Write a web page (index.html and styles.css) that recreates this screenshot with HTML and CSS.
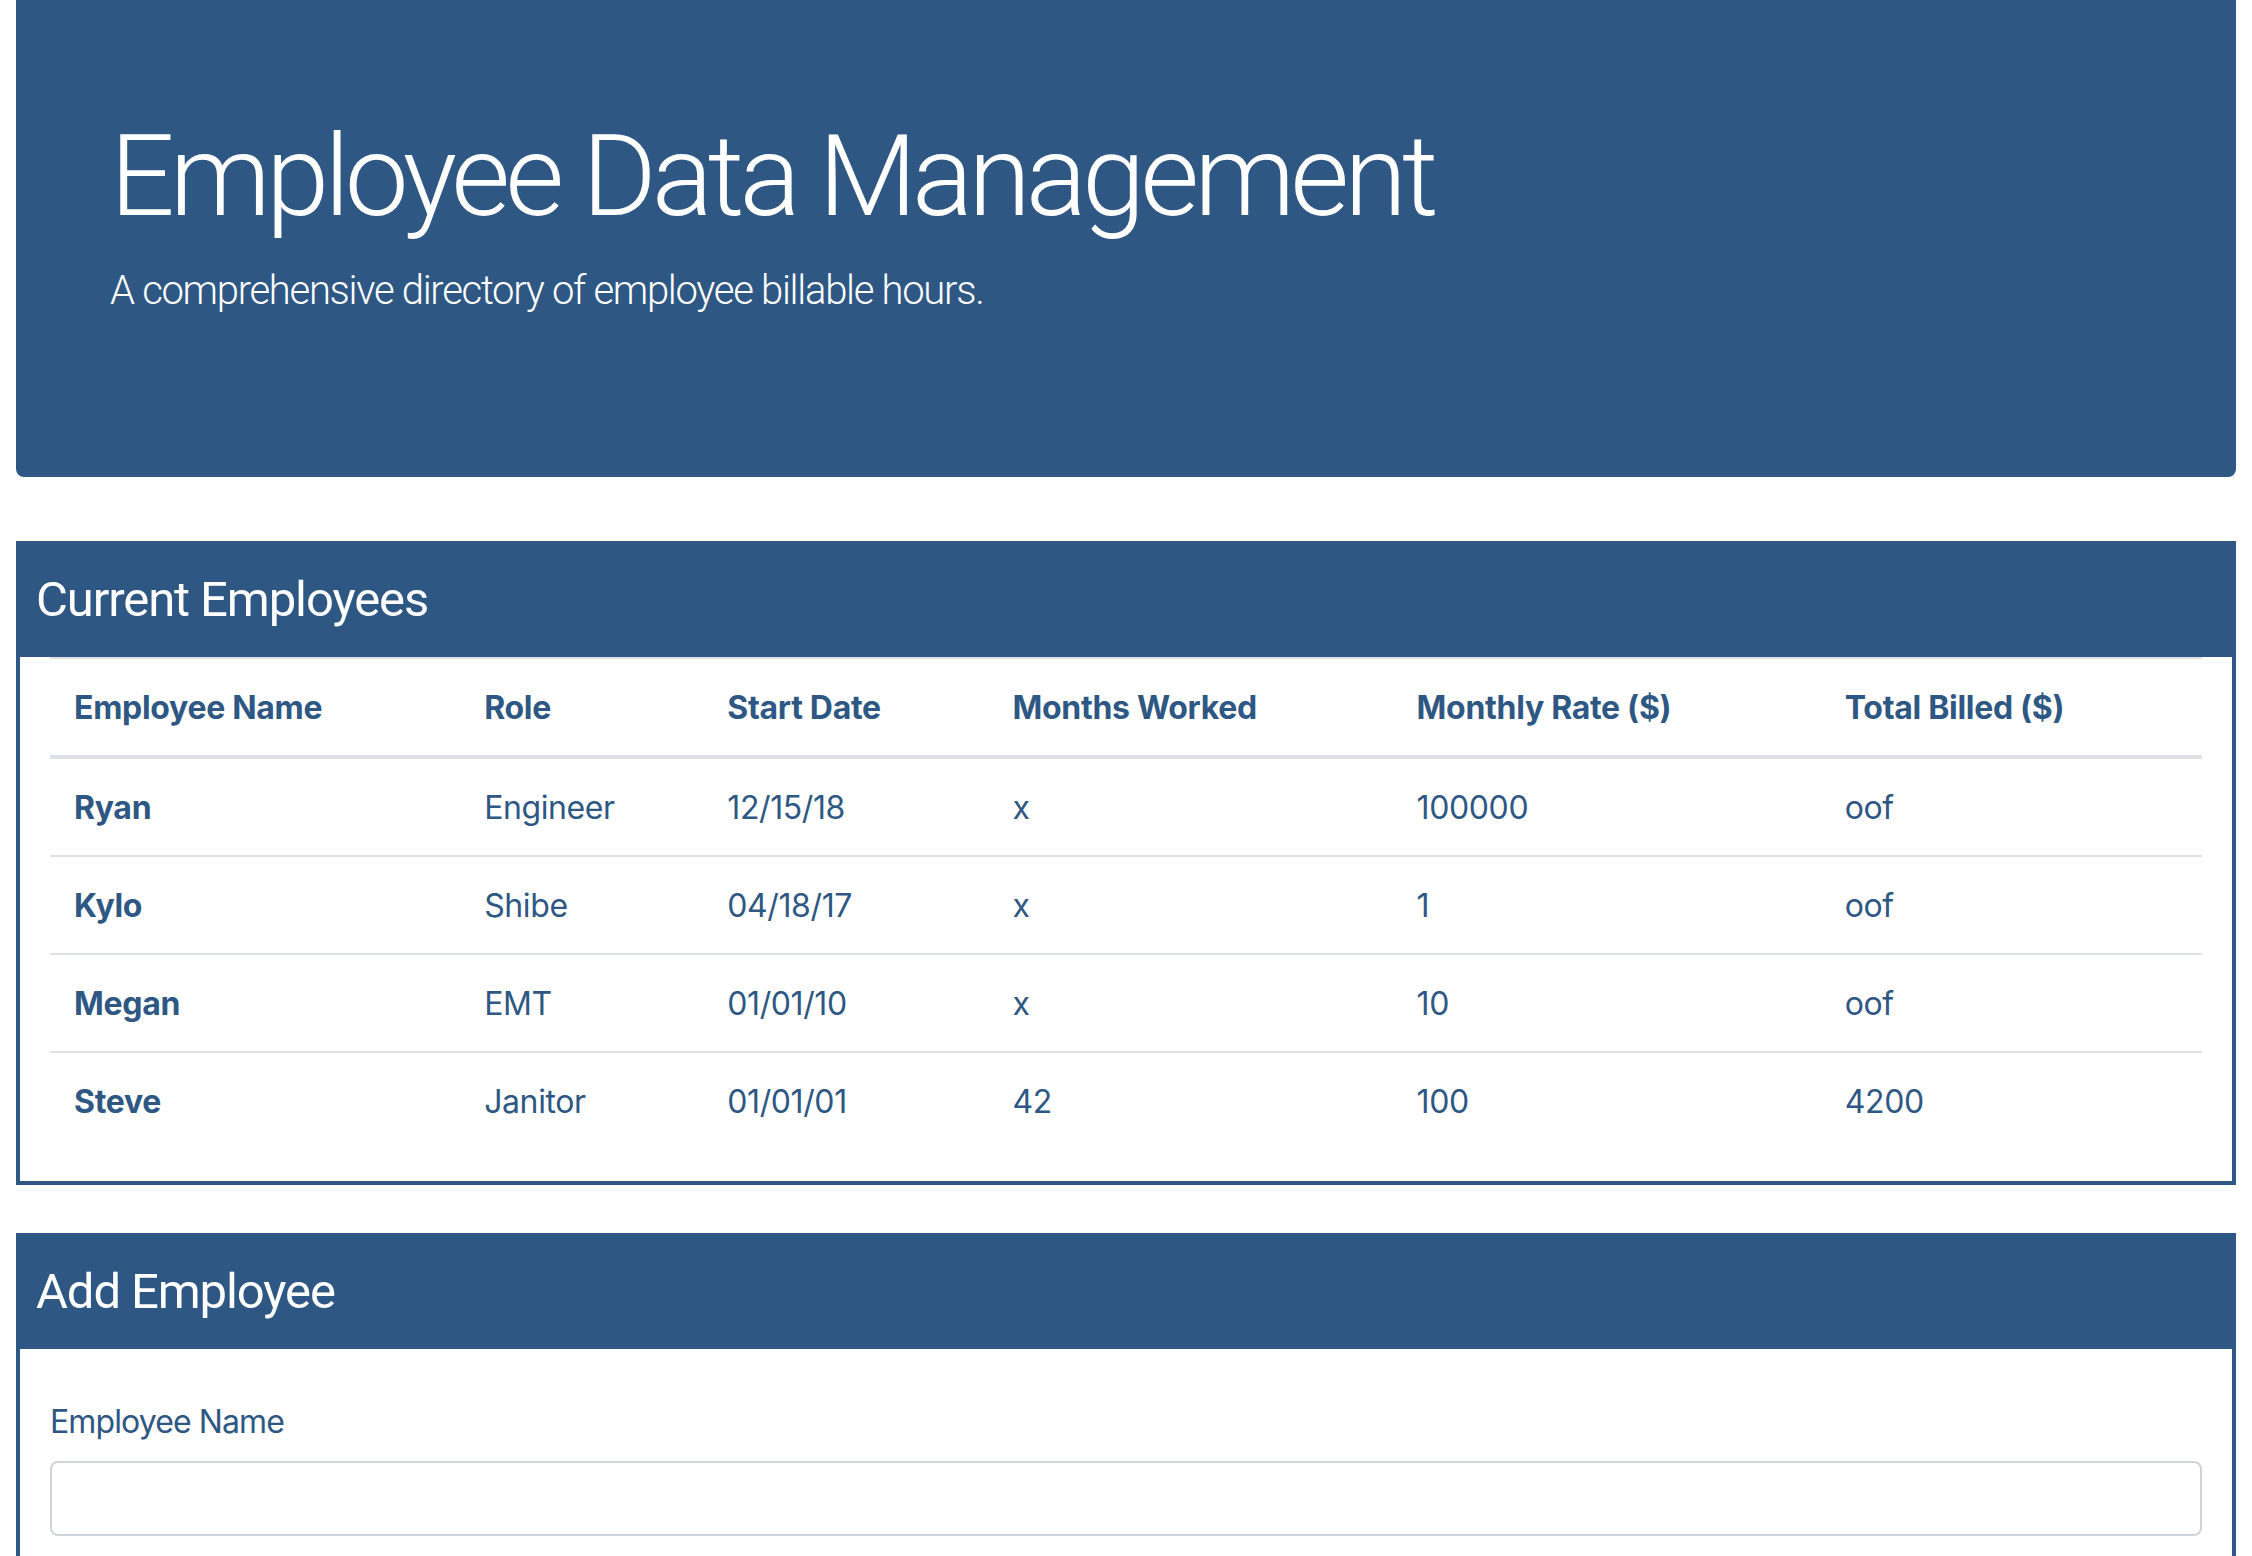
FILE: index.html
```html
<!DOCTYPE html>
<html lang="en">
<head>
<meta charset="utf-8">
<title>Employee Data Management</title>
<link rel="stylesheet" href="styles.css">
</head>
<body>
<div class="page">
  <header class="jumbotron">
    <h1 class="display">Employee Data Management</h1>
    <p class="lead">A comprehensive directory of employee billable hours.</p>
  </header>

  <section class="card">
    <div class="card-header"><h2>Current Employees</h2></div>
    <div class="card-body">
      <table class="emp-table">
        <colgroup>
          <col class="c1"><col class="c2"><col class="c3"><col class="c4"><col class="c5"><col class="c6">
        </colgroup>
        <thead>
          <tr>
            <th>Employee Name</th>
            <th>Role</th>
            <th>Start Date</th>
            <th>Months Worked</th>
            <th>Monthly Rate ($)</th>
            <th>Total Billed ($)</th>
          </tr>
        </thead>
        <tbody>
          <tr><th>Ryan</th><td>Engineer</td><td>12/15/18</td><td>x</td><td>100000</td><td>oof</td></tr>
          <tr><th>Kylo</th><td>Shibe</td><td>04/18/17</td><td>x</td><td>1</td><td>oof</td></tr>
          <tr><th>Megan</th><td>EMT</td><td>01/01/10</td><td>x</td><td>10</td><td>oof</td></tr>
          <tr><th>Steve</th><td>Janitor</td><td>01/01/01</td><td>42</td><td>100</td><td>4200</td></tr>
        </tbody>
      </table>
    </div>
  </section>

  <section class="card card-add">
    <div class="card-header"><h2>Add Employee</h2></div>
    <form class="form-body">
      <div class="form-group">
        <label for="emp-name">Employee Name</label>
        <input id="emp-name" class="form-control" type="text">
      </div>
    </form>
  </section>
</div>
</body>
</html>
```

FILE: styles.css
```css
* { box-sizing: border-box; }

html, body {
  margin: 0;
  padding: 0;
  background: #ffffff;
}

body {
  font-family: Inter, "Noto Sans", "Liberation Sans", sans-serif;
  color: #2e5883;
  font-size: 32px;
  line-height: 1.5;
}

.page {
  padding: 0 16px;
}

.jumbotron {
  background: #2e5883;
  color: #ffffff;
  height: 477px;
  padding: 108px 94px 0;
  border-radius: 0 0 8px 8px;
  margin-bottom: 64px;
  font-family: Roboto, Inter, "Liberation Sans", sans-serif;
}

.display {
  margin: 0 0 16px;
  font-size: 114px;
  font-weight: 300;
  line-height: 1.2;
  letter-spacing: -5px;
}

.lead {
  margin: 0;
  font-size: 40px;
  font-weight: 300;
  line-height: 1.5;
  letter-spacing: -1.3px;
}

.card {
  border: 4px solid #2e5883;
  border-top: 0;
  margin-bottom: 48px;
}

.card-header {
  background: #2e5883;
  color: #ffffff;
  height: 116px;
  margin: 0 -4px;
  padding: 0 20px;
  display: flex;
  align-items: center;
  font-family: Roboto, Inter, "Liberation Sans", sans-serif;
}

.card-header h2 {
  margin: 2px 0 0;
  font-size: 49px;
  font-weight: 400;
  line-height: 1.2;
  letter-spacing: -1.1px;
}

.card-body {
  padding: 0 30px 32px;
}

.emp-table {
  width: 100%;
  border-collapse: collapse;
  table-layout: fixed;
}

.c1 { width: 410px; }
.c2 { width: 243px; }
.c3 { width: 285px; }
.c4 { width: 404px; }
.c5 { width: 428px; }
.c6 { width: 381px; }

.emp-table th,
.emp-table td {
  text-align: left;
  padding: 25px 24px 23px;
  line-height: 48px;
  border-top: 2px solid #dee2e6;
  vertical-align: top;
  white-space: nowrap;
  letter-spacing: -0.4px;
}

.emp-table th {
  font-weight: 700;
  letter-spacing: -0.3px;
}

.emp-table td {
  font-weight: 400;
}

.emp-table thead th {
  border-bottom: 4px solid #dee2e6;
}

.emp-table tbody tr:first-child th,
.emp-table tbody tr:first-child td {
  border-top: 0;
}

.card-add {
  border-bottom: 0;
  margin-bottom: 0;
  min-height: 360px;
}

.form-body {
  padding: 49px 30px 40px;
}

.form-group label {
  display: block;
  font-size: 32px;
  line-height: 48px;
  margin-bottom: 15px;
  letter-spacing: -0.9px;
}

.form-control {
  display: block;
  width: 100%;
  height: 75px;
  border: 2px solid #ced4da;
  border-radius: 8px;
  background: #ffffff;
  font-family: inherit;
  font-size: 32px;
  padding: 12px 24px;
}
```
